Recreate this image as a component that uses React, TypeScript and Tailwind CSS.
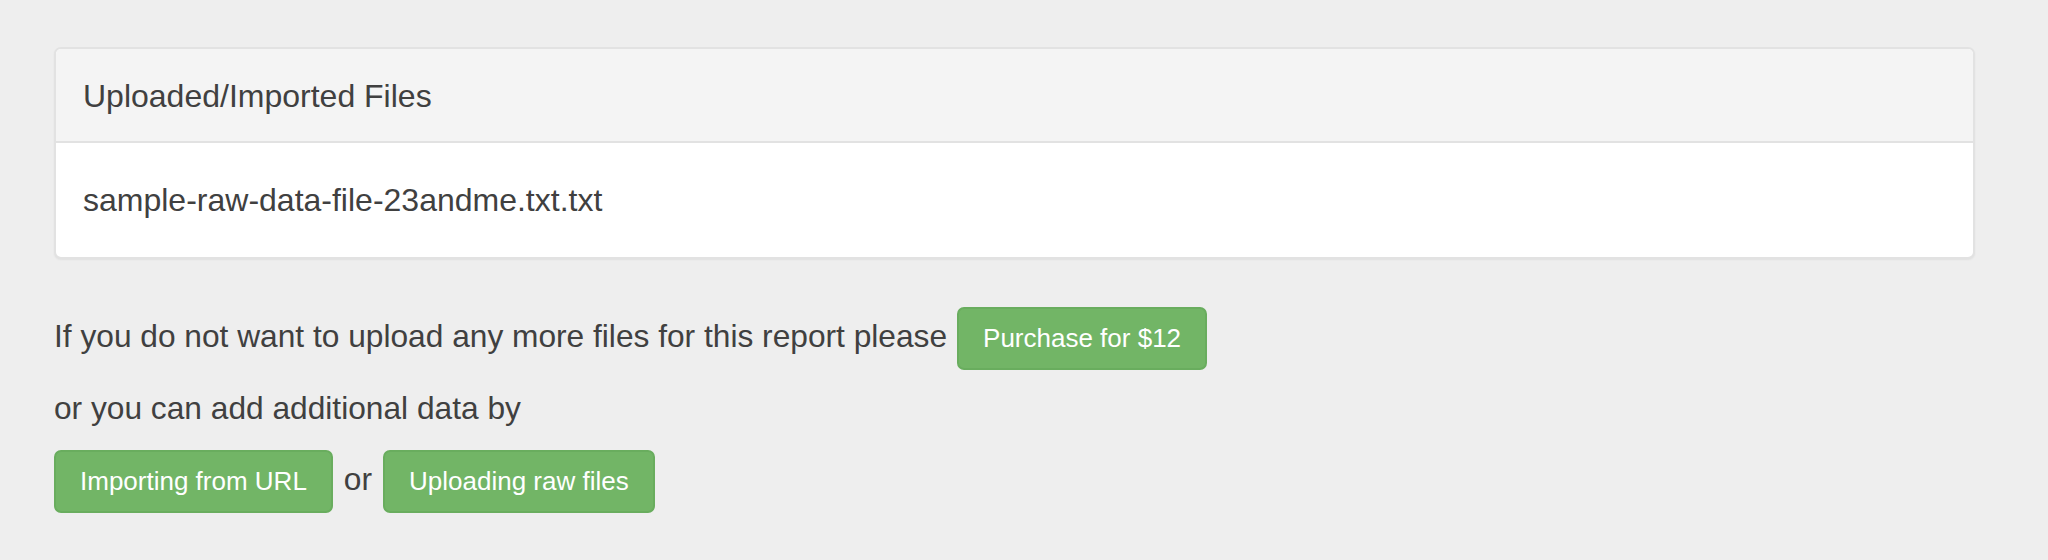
import React from "react";

const font = { fontFamily: '"Liberation Sans", Arial, sans-serif' };

function GreenButton({ children }: { children: React.ReactNode }) {
  return (
    <button
      type="button"
      className="rounded-[7px] border-2 border-[#69ad5e] bg-[#72b566] px-[24px] py-[11px] text-[26px] leading-[37px] text-white"
    >
      {children}
    </button>
  );
}

export default function App() {
  return (
    <div className="min-h-[560px] bg-[#eeeeee] text-[#404040]" style={font}>
      <div className="flex flex-col pl-[54px] pr-[73px] pt-[47px]">
        {/* Files panel */}
        <div className="overflow-hidden rounded-[7px] border-2 border-[#e2e2e2] bg-white shadow-[0_1px_2px_rgba(0,0,0,0.06)]">
          <div className="h-[94px] border-b-2 border-[#e2e2e2] bg-[#f4f4f4] px-[27px] text-[32px] leading-[94px]">
            Uploaded/Imported Files
          </div>
          <div className="h-[114px] px-[27px] text-[32px] leading-[114px]">
            sample-raw-data-file-23andme.txt.txt
          </div>
        </div>

        {/* Purchase row */}
        <div className="mt-[48px] flex items-baseline gap-[10px]">
          <span className="text-[31.7px] leading-[45px]">
            If you do not want to upload any more files for this report please
          </span>
          <GreenButton>Purchase for $12</GreenButton>
        </div>

        <div className="mt-[16px] text-[31.7px] leading-[45px]">
          or you can add additional data by
        </div>

        <div className="mt-[19px] flex items-baseline gap-[11px]">
          <GreenButton>Importing from URL</GreenButton>
          <span className="text-[31.7px] leading-[45px]">or</span>
          <GreenButton>Uploading raw files</GreenButton>
        </div>
      </div>
    </div>
  );
}
